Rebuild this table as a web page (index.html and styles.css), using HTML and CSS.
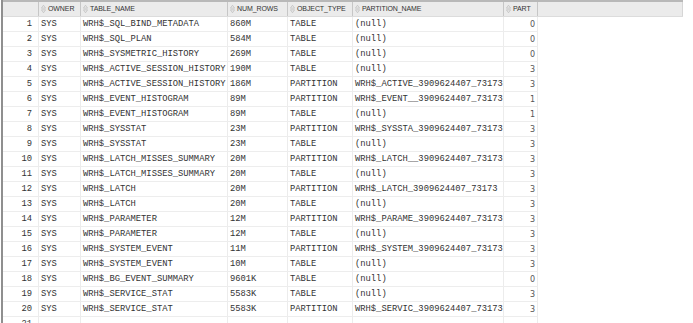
FILE: index.html
```html
<!DOCTYPE html>
<html lang="en">
<head>
    <meta charset="UTF-8">
    <title>Query Result</title>
    <link rel="stylesheet" href="styles.css">
</head>
<body>
    <div class="grid">
        <div class="row head">
            <div class="cell"></div>
            <div class="cell"><svg class="sort" viewBox="0 0 6 10"><path d="M3 0.5 L5.5 4 L0.5 4 Z M3 9.5 L5.5 6 L0.5 6 Z"/></svg>OWNER</div>
            <div class="cell"><svg class="sort" viewBox="0 0 6 10"><path d="M3 0.5 L5.5 4 L0.5 4 Z M3 9.5 L5.5 6 L0.5 6 Z"/></svg>TABLE_NAME</div>
            <div class="cell"><svg class="sort" viewBox="0 0 6 10"><path d="M3 0.5 L5.5 4 L0.5 4 Z M3 9.5 L5.5 6 L0.5 6 Z"/></svg>NUM_ROWS</div>
            <div class="cell"><svg class="sort" viewBox="0 0 6 10"><path d="M3 0.5 L5.5 4 L0.5 4 Z M3 9.5 L5.5 6 L0.5 6 Z"/></svg>OBJECT_TYPE</div>
            <div class="cell"><svg class="sort" viewBox="0 0 6 10"><path d="M3 0.5 L5.5 4 L0.5 4 Z M3 9.5 L5.5 6 L0.5 6 Z"/></svg>PARTITION_NAME</div>
            <div class="cell"><svg class="sort" viewBox="0 0 6 10"><path d="M3 0.5 L5.5 4 L0.5 4 Z M3 9.5 L5.5 6 L0.5 6 Z"/></svg>PART</div>
            <div class="cell filler"></div>
        </div>
        <div id="rows"></div>
    </div>

    <script>
        const data = [
            ['WRH$_SQL_BIND_METADATA', '860M', 'TABLE', '(null)', 0],
            ['WRH$_SQL_PLAN', '584M', 'TABLE', '(null)', 0],
            ['WRH$_SYSMETRIC_HISTORY', '269M', 'TABLE', '(null)', 0],
            ['WRH$_ACTIVE_SESSION_HISTORY', '190M', 'TABLE', '(null)', 3],
            ['WRH$_ACTIVE_SESSION_HISTORY', '186M', 'PARTITION', 'WRH$_ACTIVE_3909624407_73173', 3],
            ['WRH$_EVENT_HISTOGRAM', '89M', 'PARTITION', 'WRH$_EVENT__3909624407_73173', 1],
            ['WRH$_EVENT_HISTOGRAM', '89M', 'TABLE', '(null)', 1],
            ['WRH$_SYSSTAT', '23M', 'PARTITION', 'WRH$_SYSSTA_3909624407_73173', 3],
            ['WRH$_SYSSTAT', '23M', 'TABLE', '(null)', 3],
            ['WRH$_LATCH_MISSES_SUMMARY', '20M', 'PARTITION', 'WRH$_LATCH__3909624407_73173', 3],
            ['WRH$_LATCH_MISSES_SUMMARY', '20M', 'TABLE', '(null)', 3],
            ['WRH$_LATCH', '20M', 'PARTITION', 'WRH$_LATCH_3909624407_73173', 3],
            ['WRH$_LATCH', '20M', 'TABLE', '(null)', 3],
            ['WRH$_PARAMETER', '12M', 'PARTITION', 'WRH$_PARAME_3909624407_73173', 3],
            ['WRH$_PARAMETER', '12M', 'TABLE', '(null)', 3],
            ['WRH$_SYSTEM_EVENT', '11M', 'PARTITION', 'WRH$_SYSTEM_3909624407_73173', 3],
            ['WRH$_SYSTEM_EVENT', '10M', 'TABLE', '(null)', 3],
            ['WRH$_BG_EVENT_SUMMARY', '9601K', 'TABLE', '(null)', 0],
            ['WRH$_SERVICE_STAT', '5583K', 'TABLE', '(null)', 3],
            ['WRH$_SERVICE_STAT', '5583K', 'PARTITION', 'WRH$_SERVIC_3909624407_73173', 3],
            ['', '', '', '', '']
        ];

        const rows = document.getElementById('rows');
        data.forEach((r, i) => {
            const row = document.createElement('div');
            row.className = 'row';
            const cells = [i + 1, i < 20 ? 'SYS' : '', r[0], r[1], r[2], r[3], r[4]];
            cells.forEach((v, j) => {
                const c = document.createElement('div');
                c.className = 'cell' + (j === 0 ? ' num' : '') + (j === 6 ? ' part' : '');
                c.textContent = v;
                row.appendChild(c);
            });
            rows.appendChild(row);
        });
    </script>
</body>
</html>
```

FILE: styles.css
```css
body {
    margin: 0;
    background: #fff;
    height: 323px;
    overflow: hidden;
}

.grid {
    margin-left: 1px;
    border-left: 2px solid #8f8f8f;
    height: 100%;
}

.row {
    display: grid;
    grid-template-columns: 36px 42px 147px 60px 65px 151px 34px;
    height: 15px;
    border-bottom: 1px solid #ededed;
    width: 535px;
    box-sizing: border-box;
}

.cell {
    box-sizing: border-box;
    border-right: 1px solid #ececec;
    padding-left: 2px;
    padding-top: 1px;
    font-family: "Liberation Mono", "Courier New", monospace;
    font-size: 8.8px;
    line-height: 13px;
    color: #333;
    white-space: nowrap;
    overflow: hidden;
}

.cell.num {
    text-align: right;
    padding-right: 6px;
}

.cell.part {
    font-family: "DejaVu Sans", Tahoma, sans-serif;
    font-size: 8px;
    text-align: right;
    padding-right: 2px;
    color: #555;
}

.head {
    grid-template-columns: 36px 42px 147px 60px 65px 151px 34px 145px;
    width: 680px;
    height: 17px;
    border-top: 2px solid #b8b8b8;
    border-bottom: 1px solid #dcdcdc;
    background: #ebebeb;
}

.head .cell {
    display: flex;
    align-items: center;
    padding-top: 0;
    font-family: "Liberation Sans", Arial, sans-serif;
    font-size: 7px;
    letter-spacing: -0.1px;
    line-height: 14px;
    color: #333;
    border-right: 1px solid #c6c6c6;
    padding-left: 2px;
}

.head .cell.filler {
    border-right: 1px solid #d6d6d6;
}

.sort {
    flex: none;
    width: 5px;
    height: 10px;
    margin-right: 2px;
    fill: none;
    stroke: #b9b9b9;
    stroke-width: 0.8;
}
```
